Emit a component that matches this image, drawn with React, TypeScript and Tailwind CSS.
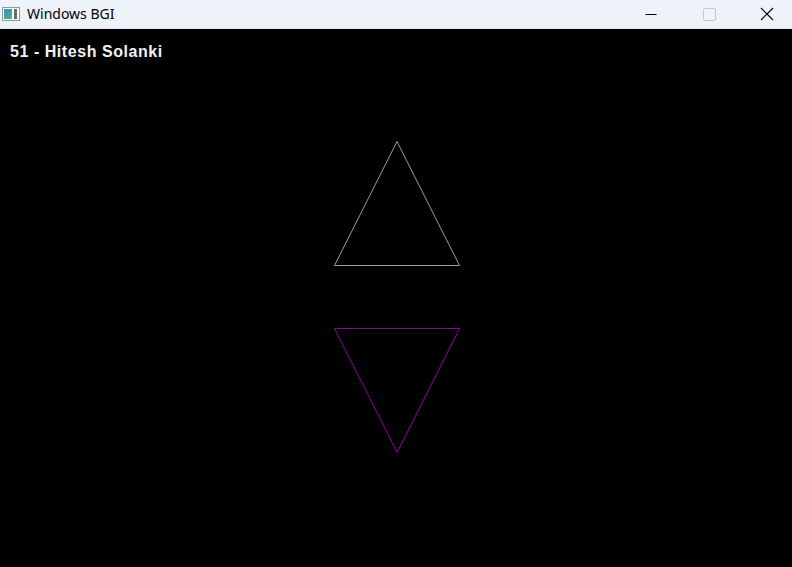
import React from 'react';

function TitleBar() {
  return (
    <div className="flex h-[29px] items-center bg-[#eef3fa] border-b border-[#dfe5ee]">
      <div className="ml-[2px] flex h-[14px] w-[18px] items-center border border-[#8a9aa8] bg-white">
        <div className="ml-[1px] h-[10px] w-[8px] bg-gradient-to-br from-[#3a8fb8] to-[#4fb27a]" />
        <div className="ml-[2px] h-[10px] w-[3px] bg-[#6a6a6a]" />
      </div>
      <span className="ml-[7px] text-[14px] leading-none text-black [font-family:'Noto_Sans','Liberation_Sans',sans-serif]">
        Windows BGI
      </span>
      <div className="ml-auto mr-[-4px] flex h-full">
        <div className="flex w-[58px] items-center justify-center">
          <svg width="12" height="12" viewBox="0 0 12 12">
            <path d="M0.5 6.5h11" stroke="#000" strokeWidth="1" />
          </svg>
        </div>
        <div className="flex w-[58px] items-center justify-center">
          <svg width="13" height="13" viewBox="0 0 13 13">
            <rect x="0.5" y="0.5" width="12" height="12" rx="1.5" fill="none" stroke="#c4c8cc" strokeWidth="1" />
          </svg>
        </div>
        <div className="flex w-[58px] items-center justify-center">
          <svg width="14" height="14" viewBox="0 0 14 14">
            <path d="M1 1L13 13M13 1L1 13" stroke="#000" strokeWidth="1.1" />
          </svg>
        </div>
      </div>
    </div>
  );
}

export default function App() {
  return (
    <div className="flex h-[567px] w-[792px] flex-col overflow-hidden bg-black">
      <TitleBar />
      <div className="relative flex-1 bg-black">
        <div className="pl-[10px] pt-[13px] text-[16px] font-bold leading-[20px] tracking-[0.55px] text-[#f2f2f2] [font-family:'Liberation_Sans',Arial,sans-serif]">
          51 - Hitesh Solanki
        </div>
        <svg className="absolute left-0 top-0" width="792" height="538" viewBox="0 29 792 538">
          <polygon points="397,141.5 334.5,265.5 459.5,265.5" fill="none" stroke="#9c9c9c" strokeWidth="1" />
          <polygon points="334.5,328.5 459.5,328.5 397,452.5" fill="none" stroke="#9000a0" strokeWidth="1" />
        </svg>
      </div>
    </div>
  );
}
